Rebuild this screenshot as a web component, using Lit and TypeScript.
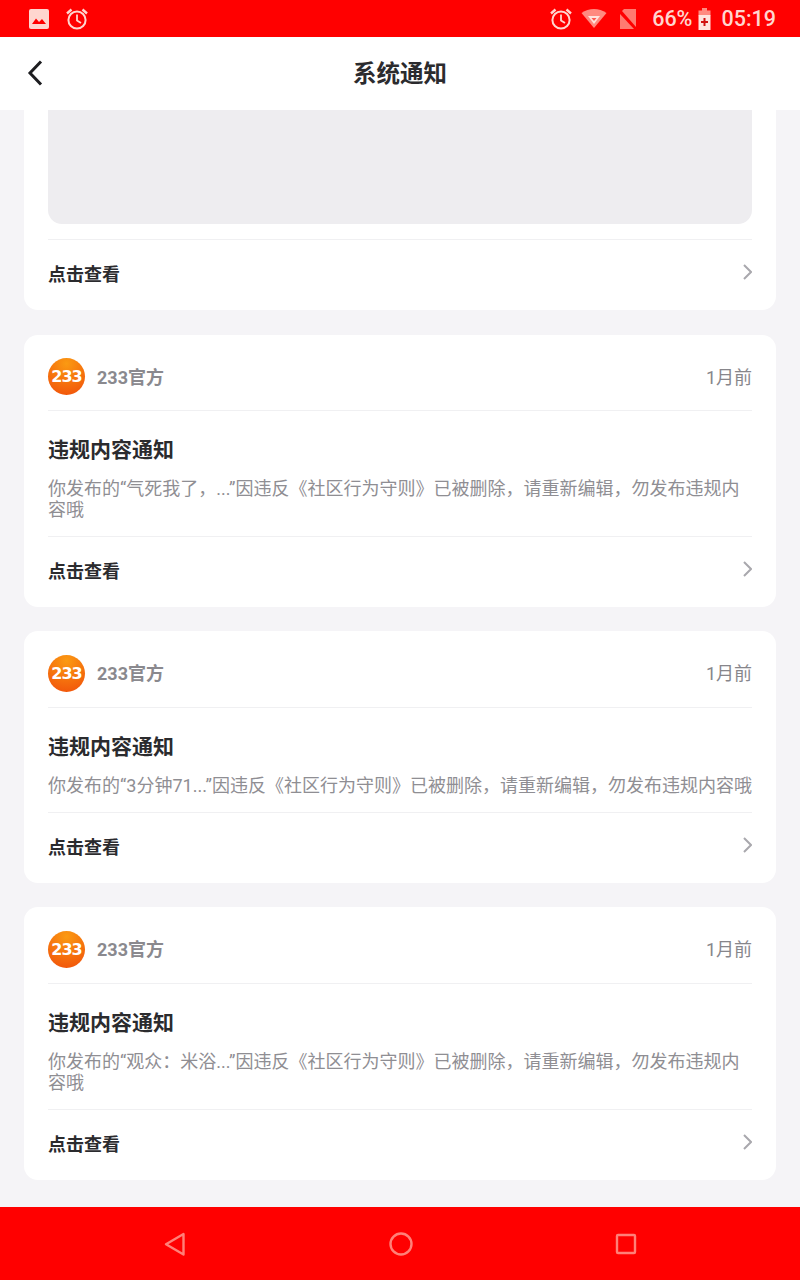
import { LitElement, html, css, svg } from 'lit';
import { customElement } from 'lit/decorators.js';

const alarm = (size: number) => html`<svg width=${size} height=${size} viewBox="0 0 24 24" fill="none" stroke="#ffd6cf" stroke-width="2">
  <circle cx="12" cy="13" r="8.6"></circle>
  <path d="M12 7.5V13.5L16 16" stroke-width="1.8"></path>
  <path d="M2 6.5L6.5 2.5M22 6.5L17.500 2.500" stroke-width="2.4"></path>
</svg>`;

const notices = [
  { body: '你发布的“气死我了，...”因违反《社区行为守则》已被删除，请重新编辑，勿发布违规内容哦' },
  { body: '你发布的“3分钟71...”因违反《社区行为守则》已被删除，请重新编辑，勿发布违规内容哦' },
  { body: '你发布的“观众：米浴...”因违反《社区行为守则》已被删除，请重新编辑，勿发布违规内容哦' },
];

@customElement('app-root')
export class AppRoot extends LitElement {
  static styles = css`
    :host {
      display: flex;
      flex-direction: column;
      width: 800px;
      height: 1280px;
      overflow: hidden;
      background: #f5f4f7;
      font-family: Roboto, 'Noto Sans CJK SC', sans-serif;
    }
    .status {
      height: 37px;
      flex: none;
      background: #ff0000;
      color: #ffd6cf;
      display: flex;
      align-items: center;
      padding: 0 24px 0 28px;
      font-size: 21.500px;
      font-weight: 500;
    }
    .status-left { display: flex; align-items: center; gap: 15px; }
    .status-right { margin-left: auto; display: flex; align-items: center; }
    .status svg { display: block; }
    .pct { margin-left: 14px; }
    .batt { margin-left: 6px; }
    .clock { margin-left: 10px; }
    .wifi { margin-left: 8px; }
    .sim { margin-left: 11px; }
    .topbar {
      height: 73px;
      box-sizing: border-box;
      padding-bottom: 3px;
      flex: none;
      background: #fff;
      display: flex;
      align-items: center;
      justify-content: center;
      position: relative;
      font-size: 23.500px;
      font-weight: 700;
      color: #2b2b2e;
    }
    .back { position: absolute; left: 24px; top: 22px; }
    main {
      flex: 1;
      min-height: 0;
      overflow: hidden;
      display: flex;
      flex-direction: column;
      justify-content: flex-end;
      gap: 24px;
      padding: 0 24px 27px;
    }
    .card {
      flex: none;
      background: #fff;
      border-radius: 14px;
      padding: 0 24px;
    }
    .card.lead { margin-bottom: 0.800px; }
    .placeholder {
      height: 220px;
      margin-bottom: 15px;
      background: #eeedf0;
      border-radius: 14px;
    }
    .head {
      padding-top: 8px;
      height: 67.600px;
      display: flex;
      align-items: center;
      border-bottom: 1px solid #f0f0f2;
      color: #87868b;
      font-size: 18px;
    }
    .logo {
      width: 37px;
      height: 37px;
      border-radius: 50%;
      background: radial-gradient(circle at 50% 15%, #fb9a12, #f2590b 85%);
      color: #fff;
      font-family: 'DejaVu Sans', sans-serif;
      font-size: 16px;
      line-height: 38px;
      font-weight: 700;
      letter-spacing: -1px;
      display: flex;
      justify-content: center;
      margin-right: 12px;
    }
    .name { font-weight: 700; color: #8a898e; margin-bottom: 2px; }
    .time { margin-left: auto; font-weight: 400; margin-bottom: 2px; }
    .title {
      font-size: 21px;
      font-weight: 700;
      line-height: 30px;
      color: #2b2b2e;
      padding-top: 24px;
    }
    .body {
      font-size: 18px;
      line-height: 20.600px;
      color: #8f8e93;
      padding: 14px 0 15.800px;
    }
    .more {
      height: 71px;
      box-sizing: border-box;
      padding-bottom: 5px;
      display: flex;
      align-items: center;
      justify-content: space-between;
      border-top: 1px solid #f0f0f2;
      font-size: 18px;
      font-weight: 700;
      color: #2b2b2e;
    }
    .more svg { display: block; margin-top: -1px; }
    .nav {
      height: 73px;
      flex: none;
      background: #ff0000;
      display: flex;
      align-items: center;
      justify-content: center;
      gap: 202px;
    }
    .nav svg { display: block; }
  `;

  chevron() {
    return html`<svg width="10" height="16" viewBox="0 0 10 16" fill="none" stroke="#a9a8ad" stroke-width="2"><path d="M2 1L9 8L2 15"></path></svg>`;
  }

  notice(body: string) {
    return html`<section class="card">
      <div class="head">
        <span class="logo">233</span>
        <span class="name">233官方</span>
        <span class="time">1月前</span>
      </div>
      <div class="title">违规内容通知</div>
      <div class="body">${body}</div>
      <div class="more">点击查看 ${this.chevron()}</div>
    </section>`;
  }

  render() {
    return html`
      <div class="status">
        <div class="status-left">
          <svg width="22" height="22" viewBox="0 0 22 22">
            <rect x="1" y="1" width="20" height="20" rx="2" fill="#ffd6cf"></rect>
            <path d="M4 16L8 10.500L11 14L14 11L18 16Z" fill="#ff0000"></path>
          </svg>
          ${alarm(24)}
        </div>
        <div class="status-right">
          ${alarm(24)}
          <svg class="wifi" width="26" height="22" viewBox="0 0 26 22">
            <path d="M0.500 5C8 -0.500 18 -0.500 25.500 5L13 20Z" fill="#ff8a80"></path>
            ${svg`<path d="M7 8H19L13 16Z" fill="#ffe3de"></path><path d="M10.500 10L13 13L15.500 10Z" fill="#ff5a50"></path>`}
          </svg>
          <svg class="sim" width="20" height="22" viewBox="0 0 20 22">
            <path d="M6 1H18V19L4 3Z" fill="#ff7a70"></path>
            <path d="M2 6L16 21H2Z" fill="#ff7a70"></path>
          </svg>
          <span class="pct">66%</span>
          <svg class="batt" width="13" height="24" viewBox="0 0 13 24">
            <rect x="4" y="1" width="5" height="3" fill="#ff8a80"></rect>
            <rect x="0.500" y="3.500" width="12" height="5" fill="#ff8a80"></rect>
            <rect x="0.500" y="8" width="12" height="15" fill="#ffe3de"></rect>
            <path d="M6.500 11V19M3 15H10" stroke="#d01010" stroke-width="2"></path>
          </svg>
          <span class="clock">05:19</span>
        </div>
      </div>
      <header class="topbar">
        <svg class="back" width="22" height="28" viewBox="0 0 22 28" fill="none" stroke="#1d1d20" stroke-width="3"><path d="M17 2.500L6 14L17 25.500"></path></svg>
        系统通知
      </header>
      <main>
        <section class="card lead">
          <div class="placeholder"></div>
          <div class="more">点击查看 ${this.chevron()}</div>
        </section>
        ${notices.map((n) => this.notice(n.body))}
      </main>
      <footer class="nav">
        <svg width="24" height="26" viewBox="0 0 24 26" fill="none" stroke="#ff8078" stroke-width="2.400" stroke-linejoin="round"><path d="M20.500 3V23.500L3 13.200Z"></path></svg>
        <svg width="24" height="24" viewBox="0 0 24 24" fill="none" stroke="#ff8078" stroke-width="2.400"><circle cx="12" cy="12" r="10.500"></circle></svg>
        <svg width="22" height="22" viewBox="0 0 22 22" fill="none" stroke="#ff8078" stroke-width="2.400" stroke-linejoin="round"><rect x="2" y="2" width="18" height="18" rx="1"></rect></svg>
      </footer>
    `;
  }
}
